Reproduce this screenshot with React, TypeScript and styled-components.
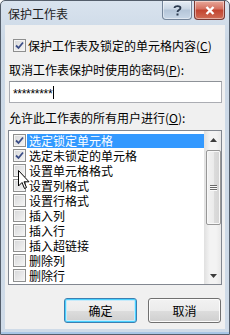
import React from "react";
import styled, { createGlobalStyle } from "styled-components";

const GlobalStyle = createGlobalStyle`
  html, body {
    margin: 0;
    padding: 0;
    width: 230px;
    height: 335px;
    overflow: hidden;
    background: #ffffff;
  }
  * {
    box-sizing: border-box;
  }
`;

const FONT = `"Noto Sans CJK SC", "Microsoft YaHei", sans-serif`;

const Window = styled.div`
  position: relative;
  width: 230px;
  height: 335px;
  border: 1px solid #545e6b;
  border-radius: 5px 5px 0 0;
  background: linear-gradient(#d9e3ee, #cbd8e6 40px, #cfdbe8);
  padding: 0 4px 5px 4px;
  display: flex;
  flex-direction: column;
  font-family: ${FONT};
  font-size: 12px;
  color: #000;
  box-shadow: inset 0 -2px 0 #a8c6e6;
`;

const TitleBar = styled.div`
  height: 24px;
  display: flex;
  align-items: flex-start;
  justify-content: space-between;
`;

const TitleText = styled.span`
  margin: 5px 0 0 3px;
  font-size: 12px;
  line-height: 16px;
  color: #1e1e1e;
`;

const Caption = styled.div`
  display: flex;
  gap: 2px;
  margin-right: 0;
`;

const CaptionButton = styled.div<{ $close?: boolean }>`
  width: ${(p) => (p.$close ? "31px" : "30px")};
  height: 19px;
  border: 1px solid ${(p) => (p.$close ? "#7a3a34" : "#74859a")};
  border-top: none;
  border-radius: 0 0 4px 4px;
  background: ${(p) =>
    p.$close
      ? "linear-gradient(#e8a89a, #d46f5e 45%, #c2432f 50%, #cf6c55)"
      : "linear-gradient(#e6edf5, #c9d6e4 45%, #b4c5d8 50%, #c8d7e7)"};
  box-shadow: inset 0 0 0 1px rgba(255, 255, 255, 0.45);
  display: flex;
  align-items: center;
  justify-content: center;
`;

const Client = styled.div`
  flex: 1;
  background: #f0f0f0;
  padding: 0 3px;
  display: flex;
  flex-direction: column;
`;

const CheckRow = styled.label`
  margin-top: 14px;
  height: 13px;
  display: flex;
  align-items: center;
  padding-left: 5px;
  gap: 2px;
`;

const RowText = styled.span`
  line-height: 14px;
  white-space: nowrap;
`;

const Box = styled.span`
  width: 13px;
  height: 13px;
  flex: none;
  border: 1px solid #8e8f8f;
  background: linear-gradient(135deg, #d6d7d9, #f6f6f6);
  box-shadow: inset 0 0 0 1px #f4f4f4;
  display: flex;
  align-items: center;
  justify-content: center;
`;

const Label = styled.div<{ $gap: number }>`
  margin-top: ${(p) => p.$gap}px;
  padding-left: 1px;
  line-height: 14px;
  white-space: nowrap;
`;

const Key = styled.span`
  text-decoration: underline;
`;

const PasswordBox = styled.div`
  margin: 4px 0 0 1px;
  height: 22px;
  border: 1px solid #abadb3;
  border-top-color: #8e9298;
  background: #fff;
  display: flex;
  align-items: center;
  padding-left: 3px;
`;

const Stars = styled.span`
  font-family: "Liberation Sans", Arial, sans-serif;
  font-size: 12px;
  letter-spacing: -0.3px;
  line-height: 12px;
  margin-top: 3px;
`;

const Caret = styled.span`
  width: 1px;
  height: 13px;
  background: #000;
  margin-left: 1px;
`;

const ListBox = styled.div`
  margin-top: 5px;
  height: 155px;
  border: 1px solid #828790;
  background: #fff;
  display: flex;
`;

const Items = styled.div`
  flex: 1;
  padding-top: 2px;
  display: flex;
  flex-direction: column;
`;

const Item = styled.div`
  height: 15px;
  display: flex;
  align-items: center;
  padding-left: 4px;
`;

const ItemText = styled.span<{ $selected?: boolean }>`
  flex: 1;
  height: 14px;
  margin-left: 1px;
  padding-left: 2px;
  line-height: 14px;
  white-space: nowrap;
  background: ${(p) => (p.$selected ? "#3399ff" : "transparent")};
  color: ${(p) => (p.$selected ? "#fff" : "#000")};
`;

const ScrollBar = styled.div`
  width: 17px;
  background: linear-gradient(90deg, #e3e3e3, #f3f3f3 30%, #f3f3f3 70%, #e8e8e8);
  border-left: 1px solid #e2e2e2;
  display: flex;
  flex-direction: column;
  align-items: center;
`;

const ArrowCell = styled.div`
  height: 17px;
  width: 100%;
  display: flex;
  align-items: center;
  justify-content: center;
`;

const Thumb = styled.div`
  margin-top: 2px;
  width: 15px;
  height: 75px;
  border: 1px solid #979797;
  border-radius: 2px;
  background: linear-gradient(90deg, #f2f2f2, #ebebeb 50%, #dcdcdc 51%, #d4d4d4);
  box-shadow: inset 0 0 0 1px #f8f8f8;
  display: flex;
  flex-direction: column;
  align-items: center;
  justify-content: center;
  gap: 1px;
`;

const Grip = styled.span`
  width: 7px;
  height: 1px;
  background: #6a6a6a;
  box-shadow: 0 1px 0 #fafafa;
`;

const Track = styled.div`
  flex: 1;
`;

const Buttons = styled.div`
  margin-top: 13px;
  display: flex;
  justify-content: flex-end;
  gap: 11px;
  padding-right: 1px;
`;

const Button = styled.div<{ $default?: boolean }>`
  width: 73px;
  height: 25px;
  border: 1px solid ${(p) => (p.$default ? "#3c7fb1" : "#707070")};
  border-radius: 3px;
  background: linear-gradient(#f2f2f2, #ebebeb 50%, #dddddd 51%, #cfcfcf);
  box-shadow: ${(p) =>
    p.$default
      ? "inset 0 0 0 1px #48d1ff, inset 0 0 0 2px #c6eafa"
      : "inset 0 0 0 1px #fcfcfc"};
  display: flex;
  align-items: center;
  justify-content: center;
  line-height: 14px;
`;

const Cursor = styled.svg`
  position: absolute;
  left: 17px;
  top: 169px;
`;

const Check = () => (
  <svg width="9" height="9" viewBox="0 0 9 9">
    <path
      d="M1 4.5 L3.5 7 L8 1.5"
      fill="none"
      stroke="#3b4e87"
      strokeWidth="1.8"
    />
  </svg>
);

const items = [
  { text: "选定锁定单元格", checked: true, selected: true },
  { text: "选定未锁定的单元格", checked: true },
  { text: "设置单元格格式" },
  { text: "设置列格式" },
  { text: "设置行格式" },
  { text: "插入列" },
  { text: "插入行" },
  { text: "插入超链接" },
  { text: "删除列" },
  { text: "删除行" },
];

export default function App() {
  return (
    <>
      <GlobalStyle />
      <Window>
        <TitleBar>
          <TitleText>保护工作表</TitleText>
          <Caption>
            <CaptionButton>
              <svg width="9" height="11" viewBox="0 0 9 11">
                <path
                  d="M1.5 3 C1.5 0.5 7.5 0.5 7.5 3 C7.5 5 4.5 5 4.5 7"
                  fill="none"
                  stroke="#2b3a4f"
                  strokeWidth="1.8"
                />
                <rect x="3.5" y="8.5" width="2" height="2" fill="#2b3a4f" />
              </svg>
            </CaptionButton>
            <CaptionButton $close>
              <svg width="10" height="9" viewBox="0 0 10 9">
                <path
                  d="M1.5 1 L8.5 8 M8.5 1 L1.5 8"
                  stroke="#fff"
                  strokeWidth="2.4"
                />
              </svg>
            </CaptionButton>
          </Caption>
        </TitleBar>
        <Client>
          <CheckRow>
            <Box>
              <Check />
            </Box>
            <RowText>
              保护工作表及锁定的单元格内容(<Key>C</Key>)
            </RowText>
          </CheckRow>
          <Label $gap={11}>
            取消工作表保护时使用的密码(<Key>P</Key>):
          </Label>
          <PasswordBox>
            <Stars>*********</Stars>
            <Caret />
          </PasswordBox>
          <Label $gap={8}>
            允许此工作表的所有用户进行(<Key>O</Key>):
          </Label>
          <ListBox>
            <Items>
              {items.map((it) => (
                <Item key={it.text}>
                  <Box>{it.checked && <Check />}</Box>
                  <ItemText $selected={it.selected}>{it.text}</ItemText>
                </Item>
              ))}
            </Items>
            <ScrollBar>
              <ArrowCell>
                <svg width="7" height="4" viewBox="0 0 7 4">
                  <path d="M0 4 L3.5 0 L7 4 Z" fill="#3c3c3c" />
                </svg>
              </ArrowCell>
              <Thumb>
                <Grip />
                <Grip />
                <Grip />
              </Thumb>
              <Track />
              <ArrowCell>
                <svg width="7" height="4" viewBox="0 0 7 4">
                  <path d="M0 0 L7 0 L3.5 4 Z" fill="#3c3c3c" />
                </svg>
              </ArrowCell>
            </ScrollBar>
          </ListBox>
          <Buttons>
            <Button $default>确定</Button>
            <Button>取消</Button>
          </Buttons>
        </Client>
        <Cursor width="13" height="20" viewBox="0 0 13 20">
          <path
            d="M0.5 0.5 L0.5 16 L4 12.5 L6.5 18.5 L8.5 17.5 L6 11.8 L11 11.8 Z"
            fill="#fff"
            stroke="#000"
            strokeWidth="1"
          />
        </Cursor>
      </Window>
    </>
  );
}
